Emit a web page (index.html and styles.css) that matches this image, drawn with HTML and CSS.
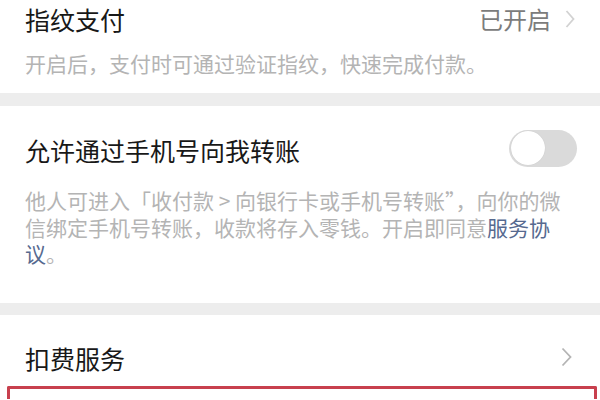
FILE: index.html
```html
<!DOCTYPE html>
<html lang="zh-CN">
<head>
<meta charset="utf-8">
<link rel="stylesheet" href="styles.css">
</head>
<body>
<div class="page">
  <section class="group g1">
    <div class="row">
      <span class="title">指纹支付</span>
      <span class="value">已开启<svg class="chev chev-top" width="10" height="20" viewBox="0 0 10 20"><polyline points="1.5,2 8.5,10 1.5,18" fill="none" stroke="#d2d2d2" stroke-width="1.8"/></svg></span>
    </div>
    <p class="desc d1">开启后，支付时可通过验证指纹，快速完成付款。</p>
  </section>
  <div class="gap"></div>
  <section class="group g2">
    <div class="row">
      <span class="title">允许通过手机号向我转账</span>
      <span class="switch"><span class="knob"></span></span>
    </div>
    <p class="desc d2">他人可进入「收付款 &gt; 向银行卡或手机号转账”，向你的微信绑定手机号转账，收款将存入零钱。开启即同意<span class="link">服务协议</span>。</p>
  </section>
  <div class="gap gap2"></div>
  <section class="group g3">
    <div class="row">
      <span class="title">扣费服务</span>
      <svg class="chev chev-bot" width="11" height="20" viewBox="0 0 11 20"><polyline points="1.5,1.5 9.5,10 1.5,18.5" fill="none" stroke="#b4b4b4" stroke-width="1.8"/></svg>
    </div>
    <div class="highlight"></div>
  </section>
</div>
</body>
</html>
```
FILE: styles.css
```css
html, body {
  margin: 0;
  padding: 0;
  background: #ffffff;
  overflow: hidden;
}
body {
  width: 600px;
  height: 400px;
  font-family: "Noto Sans CJK SC", "Noto Sans", sans-serif;
}
.page {
  display: flex;
  flex-direction: column;
  height: 400px;
  overflow: hidden;
}
.group {
  background: #ffffff;
  padding: 0 25px;
}
.g1 {
  padding-top: 0;
  height: 93px;
  box-sizing: border-box;
}
.g2 {
  padding-top: 25px;
  height: 197px;
  box-sizing: border-box;
}
.g3 {
  padding-top: 24px;
  padding-left: 0;
  padding-right: 0;
}
.g3 .row {
  padding: 0 25px 0 25px;
}
.gap {
  height: 13px;
  background: #ededed;
  flex-shrink: 0;
}
.gap2 {
  height: 12px;
}
.row {
  display: flex;
  align-items: center;
  justify-content: space-between;
  height: 38px;
}
.title {
  font-size: 25px;
  color: #181818;
  line-height: 38px;
}
.value {
  display: flex;
  align-items: center;
  font-size: 24px;
  color: #7c7c7c;
  line-height: 38px;
}
.chev-top {
  margin-left: 14px;
  margin-top: -1px;
}
.chev-bot {
  margin-right: 3px;
  margin-top: -3px;
}
.desc {
  margin: 0;
  font-size: 21px;
  color: #b4b4b4;
}
.d1 {
  margin-top: 12px;
  line-height: 26px;
}
.d2 {
  margin-top: 18px;
  line-height: 26.5px;
}
.link {
  color: #56698f;
}
.switch {
  width: 68px;
  height: 37px;
  border-radius: 19px;
  background: #dadada;
  display: flex;
  align-items: center;
  padding: 0 2px;
  box-sizing: border-box;
  margin-top: -4px;
  margin-right: -2px;
}
.knob {
  width: 34px;
  height: 34px;
  border-radius: 50%;
  background: #ffffff;
  box-shadow: 0 0 1px rgba(0,0,0,0.15);
}
.highlight {
  margin: 9px 3px 0 7px;
  height: 10px;
  border: 3px solid #c8404e;
  border-bottom: none;
  border-radius: 2px 2px 0 0;
}
```
